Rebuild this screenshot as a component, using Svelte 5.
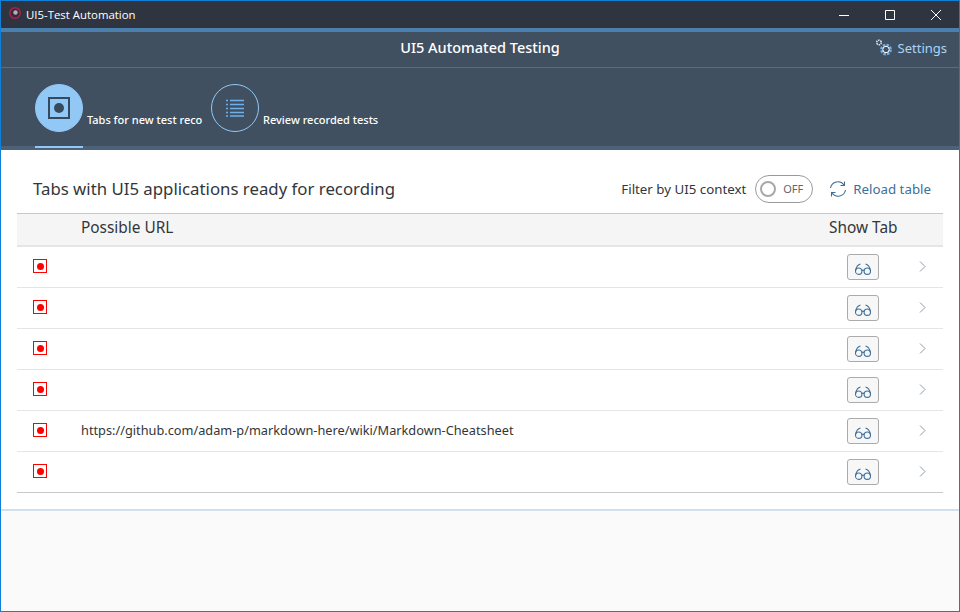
<script>
    const rows = ['', '', '', '', 'https://github.com/adam-p/markdown-here/wiki/Markdown-Cheatsheet', ''];
</script>

<div class="window">
    <div class="titlebar">
        <svg class="logo" width="14" height="14" viewBox="0 0 14 14">
            <circle cx="7" cy="7" r="5.2" fill="#3a2a38" stroke="#b01f4e" stroke-width="1.5" />
            <circle cx="7.5" cy="6.5" r="2.2" fill="#a9b2bb" />
        </svg>
        <span class="app-name">UI5-Test Automation</span>
        <div class="controls">
            <svg width="10" height="10" viewBox="0 0 10 10"><path d="M0 5.5h10" stroke="#fff" fill="none" /></svg>
            <svg width="10" height="10" viewBox="0 0 10 10"><path d="M.5.5h9v9h-9z" stroke="#fff" fill="none" /></svg>
            <svg width="10" height="10" viewBox="0 0 10 10"><path d="M0 0l10 10M10 0L0 10" stroke="#fff" fill="none" /></svg>
        </div>
    </div>

    <header>
        <div class="shellbar">
            <h1>UI5 Automated Testing</h1>
            <button class="settings">
                <svg width="18" height="18" viewBox="0 0 18 18" fill="none">
                    <circle cx="4" cy="3.500" r="2.300" stroke="#cfe6fb" stroke-width="1.600" stroke-dasharray="1.500 .7" />
                    <circle cx="11" cy="10.500" r="4.600" stroke="#6fb0ea" stroke-width="2.600" stroke-dasharray="2.400 1.200" />
                    <circle cx="11" cy="10.500" r="3.200" stroke="#fff" stroke-width="1" />
                </svg>
                Settings
            </button>
        </div>
        <nav>
            <div class="tab active">
                <div class="tab-circle">
                    <svg width="22" height="22" viewBox="0 0 22 22">
                        <path d="M1 1h20v20H1z" fill="none" stroke="#354a5f" stroke-width="2" />
                        <circle cx="11" cy="11" r="5" fill="#354a5f" />
                    </svg>
                </div>
                <span class="tab-label clip">Tabs for new test reco</span>
            </div>
            <div class="tab">
                <div class="tab-circle">
                    <svg width="18" height="18" viewBox="0 0 18 18" fill="none" stroke="#6fb0ea" stroke-width="1.500">
                        <path d="M4 1.500h14M4 5.500h14M4 9.500h14M4 13.500h14M4 17h14" />
                        <path d="M0 1.500h2M0 5.500h2M0 9.500h2M0 13.500h2M0 17h2" />
                    </svg>
                </div>
                <span class="tab-label">Review recorded tests</span>
            </div>
        </nav>
    </header>

    <main>
        <div class="toolbar">
            <h2>Tabs with UI5 applications ready for recording</h2>
            <div class="filter">
                <span>Filter by UI5 context</span>
                <div class="switch"><i></i><span>OFF</span></div>
                <button class="reload">
                    <svg width="18" height="18" viewBox="0 0 18 18" fill="none" stroke="#3d6f99" stroke-width="1.100">
                        <path d="M1.500 8A7.500 7.500 0 0 1 15 5M16.500 10A7.500 7.500 0 0 1 3 13" />
                        <path d="M15.500 1.500V5.500H11.500M2.500 16.500V12.500H6.500" />
                    </svg>
                    Reload table
                </button>
            </div>
        </div>

        <div class="table">
            <div class="row head">
                <span class="url">Possible URL</span>
                <span class="show">Show Tab</span>
            </div>
            {#each rows as url}
                <div class="row">
                    <span class="rec"><i></i></span>
                    <span class="url">{url}</span>
                    <span class="show">
                        <button class="glasses" aria-label="Show tab">
                            <svg width="16" height="12" viewBox="0 0 16 12" fill="none" stroke="#3d6f99" stroke-width="1.100">
                                <circle cx="3.700" cy="8.200" r="3.200" />
                                <circle cx="12.300" cy="8.200" r="3.200" />
                                <path d="M6.800 7.600c.8-.6 1.600-.6 2.400 0M.6 7.400C1.200 4.500 3 1.500 5.500 1M15.400 7.400C14.800 4.500 13 1.500 10.500 1" />
                            </svg>
                        </button>
                    </span>
                    <svg class="chevron" width="7" height="11" viewBox="0 0 7 11" fill="none" stroke="#8c9aa8">
                        <path d="M1 .5l5 5-5 5" />
                    </svg>
                </div>
            {/each}
        </div>
    </main>

    <div class="footer"></div>
</div>

<style>
    :global(body) {
        margin: 0;
    }

    .window {
        box-sizing: border-box;
        width: 960px;
        height: 612px;
        display: flex;
        flex-direction: column;
        border: 1px solid #0f7fd8;
        font-family: "Noto Sans", "Open Sans", sans-serif;
        color: #32363a;
        overflow: hidden;
    }

    .titlebar {
        height: 27px;
        flex: none;
        display: flex;
        align-items: center;
        background: #2f3540;
        color: #fff;
        padding-left: 7px;
        font-family: "Open Sans", sans-serif;
        font-size: 11.400px;
    }

    .logo {
        margin-right: 4px;
        margin-top: -3px;
    }

    .controls {
        margin-left: auto;
        display: flex;
        gap: 36px;
        padding-right: 18px;
    }

    header {
        flex: none;
        height: 122px;
        box-sizing: border-box;
        background: #405060;
        border-top: 4px solid #4a7fae;
        border-bottom: 4px solid #4d6277;
        display: flex;
        flex-direction: column;
    }

    .shellbar {
        height: 36px;
        flex: none;
        box-sizing: border-box;
        border-bottom: 1px solid #5a6b7b;
        padding-bottom: 5px;
        display: flex;
        align-items: center;
        justify-content: center;
        position: relative;
    }

    h1 {
        margin: 0;
        font-size: 14.500px;
        font-weight: 500;
        color: #fff;
    }

    button {
        font: inherit;
        background: none;
        border: 0;
        padding: 0;
    }

    .settings {
        position: absolute;
        right: 12px;
        top: 7px;
        display: flex;
        align-items: center;
        gap: 5px;
        color: #a9d4f8;
        font-size: 13px;
    }

    nav {
        display: flex;
        padding-left: 34px;
        padding-top: 16px;
        gap: 8px;
    }

    .tab {
        display: flex;
        position: relative;
        height: 64px;
    }

    .tab-circle {
        box-sizing: border-box;
        width: 48px;
        height: 48px;
        border-radius: 50%;
        border: 1px solid #91c8f6;
        display: flex;
        align-items: center;
        justify-content: center;
    }

    .active .tab-circle {
        background: #91c8f6;
    }

    .active::after {
        content: "";
        position: absolute;
        left: 0;
        bottom: 0;
        width: 48px;
        height: 2px;
        background: #91c8f6;
    }

    .tab-label {
        color: #fff;
        font-size: 11px;
        font-weight: 500;
        margin: 28px 0 0 4px;
        line-height: 16px;
        white-space: nowrap;
    }

    .clip {
        width: 116px;
        overflow: hidden;
    }

    main {
        flex: none;
        height: 359px;
        background: #fff;
        padding: 0 16px;
        box-sizing: border-box;
    }

    .toolbar {
        height: 63px;
        box-sizing: border-box;
        padding: 14px 12px 0 16px;
        display: flex;
        align-items: center;
        justify-content: space-between;
    }

    h2 {
        margin: 0;
        font-size: 16.800px;
        font-weight: 400;
    }

    .filter {
        display: flex;
        align-items: center;
        font-size: 13.300px;
    }

    .switch {
        box-sizing: border-box;
        width: 58px;
        height: 28px;
        margin: 0 16px 0 9px;
        border: 1px solid #9a9a9a;
        border-radius: 14px;
        display: flex;
        align-items: center;
        padding-left: 4px;
        gap: 7px;
        font-size: 11px;
        color: #666;
    }

    .switch i {
        box-sizing: border-box;
        width: 16px;
        height: 16px;
        border: 2px solid #a8a8a8;
        border-radius: 50%;
    }

    .reload {
        display: flex;
        align-items: center;
        gap: 6px;
        color: #3d6f99;
    }

    .table {
        border-bottom: 1px solid #c8c8c8;
    }

    .row {
        height: 41px;
        box-sizing: border-box;
        display: flex;
        align-items: center;
        border-bottom: 1px solid #e5e5e5;
        padding-bottom: 2px;
        position: relative;
        font-size: 12.750px;
    }

    .row:last-child {
        border-bottom: 0;
        height: 40px;
    }

    .head {
        height: 34px;
        background: #f5f5f5;
        border-top: 1px solid #c8c8c8;
        border-bottom: 2px solid #e5e5e5;
        font-size: 15.400px;
        padding-bottom: 4px;
    }

    .url {
        position: absolute;
        left: 64px;
    }

    .rec {
        box-sizing: border-box;
        width: 14px;
        height: 14px;
        margin-left: 16px;
        border: 1px solid #f00;
        display: flex;
        align-items: center;
        justify-content: center;
    }

    .rec i {
        width: 7px;
        height: 7px;
        border-radius: 50%;
        background: #f00;
    }

    .show {
        position: absolute;
        left: 812px;
    }

    .row:not(.head) .show {
        left: 830px;
        top: 7px;
    }

    .glasses {
        box-sizing: border-box;
        width: 32px;
        height: 26px;
        padding-top: 4px;
        border: 1px solid #ababab;
        border-radius: 3px;
        background: #f7f7f7;
        display: flex;
        align-items: center;
        justify-content: center;
    }

    .chevron {
        position: absolute;
        left: 902px;
        top: 14px;
    }

    .footer {
        flex: 1;
        background: #fafafa;
        border-top: 2px solid #d1e0ef;
    }
</style>
